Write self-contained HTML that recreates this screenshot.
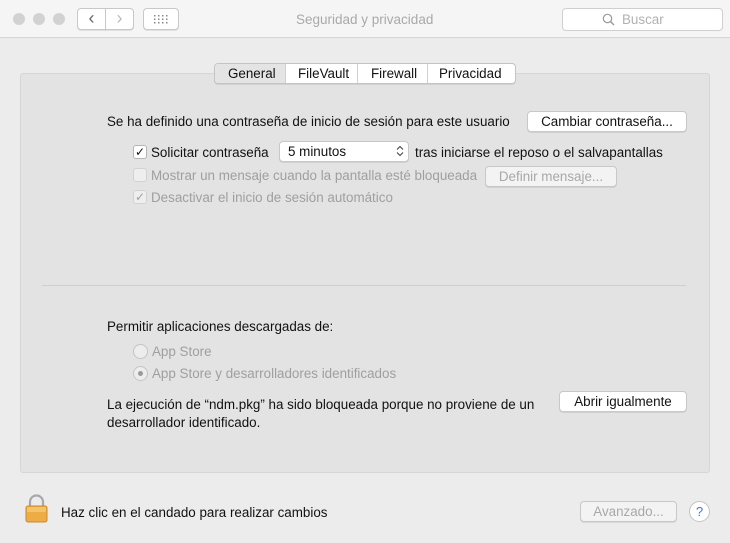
<!DOCTYPE html>
<html><head><meta charset="utf-8"><style>
*{box-sizing:border-box;margin:0;padding:0}
body{width:730px;height:543px;background:#ececec;font-family:"Liberation Sans",sans-serif;font-size:13.4px;color:#111;position:relative;overflow:hidden}
.a{position:absolute;white-space:nowrap}
.tb{left:0;top:0;width:730px;height:38px;background:#f5f5f5;border-bottom:1px solid #d4d4d4}
.dot{width:12px;height:12px;border-radius:50%;background:#d2d2d2;top:13px}
.btn{background:#fff;border:1px solid #c8c8c8;border-radius:4px;box-shadow:0 1px 0 rgba(0,0,0,.08);text-align:center;line-height:19px;height:21px}
.dis{color:#a8a8a8;background:#f3f3f3}
.panel{left:20px;top:73px;width:690px;height:400px;background:#e3e3e3;border:1px solid #d6d6d6;border-radius:3px}
.cb{width:14px;height:14px;border:1px solid #b5b5b5;border-radius:3px;background:#fff;font-size:12px;line-height:12px;text-align:center}
.g{color:#9f9f9f}
.rd{width:15px;height:15px;border-radius:50%;border:1px solid #c4c4c4;background:#ededed}
</style></head><body>
<div class="a tb"></div>
<div class="a dot" style="left:13px"></div>
<div class="a dot" style="left:33px"></div>
<div class="a dot" style="left:53px"></div>
<div class="a btn" style="left:77px;top:8px;width:29px;height:22px;border-radius:4px 0 0 4px;color:#666;font-size:18px;line-height:18px">&#8249;</div>
<div class="a btn" style="left:105px;top:8px;width:29px;height:22px;border-radius:0 4px 4px 0;color:#bbb;font-size:18px;line-height:18px">&#8250;</div>
<div class="a btn" style="left:143px;top:8px;width:36px;height:22px"></div>
<svg class="a" style="left:153px;top:14px" width="16" height="10"><g fill="#888"><rect x="1" y="1" width="1.5" height="1.5"/><rect x="5" y="1" width="1.5" height="1.5"/><rect x="9" y="1" width="1.5" height="1.5"/><rect x="13" y="1" width="1.5" height="1.5"/><rect x="1" y="4.5" width="1.5" height="1.5"/><rect x="5" y="4.5" width="1.5" height="1.5"/><rect x="9" y="4.5" width="1.5" height="1.5"/><rect x="13" y="4.5" width="1.5" height="1.5"/><rect x="1" y="8" width="1.5" height="1.5"/><rect x="5" y="8" width="1.5" height="1.5"/><rect x="9" y="8" width="1.5" height="1.5"/><rect x="13" y="8" width="1.5" height="1.5"/></g></svg>
<div class="a" style="left:296px;top:12px;color:#a9a9a9;font-size:13.5px">Seguridad y privacidad</div>
<div class="a" style="left:562px;top:8px;width:161px;height:23px;background:#fff;border:1px solid #cfcfcf;border-radius:4px"></div>
<svg class="a" style="left:602px;top:13px" width="14" height="14"><circle cx="5.5" cy="5.5" r="4.2" fill="none" stroke="#999" stroke-width="1.2"/><line x1="8.5" y1="8.5" x2="12" y2="12" stroke="#999" stroke-width="1.4"/></svg>
<div class="a" style="left:622px;top:12px;color:#b2b2b2">Buscar</div>

<div class="a panel"></div>
<div class="a" style="left:214px;top:63px;width:302px;height:21px;background:#fff;border:1px solid #c4c4c4;border-radius:4px;box-shadow:0 1px 0 rgba(0,0,0,.08)"></div>
<div class="a" style="left:215px;top:64px;width:71px;height:19px;background:#e4e4e4;border-right:1px solid #d0d0d0;border-radius:3px 0 0 3px"></div>
<div class="a" style="left:357px;top:64px;width:1px;height:19px;background:#d0d0d0"></div>
<div class="a" style="left:427px;top:64px;width:1px;height:19px;background:#d0d0d0"></div>
<div class="a" style="left:228px;top:66px">General</div>
<div class="a" style="left:298px;top:66px">FileVault</div>
<div class="a" style="left:371px;top:66px">Firewall</div>
<div class="a" style="left:439px;top:66px">Privacidad</div>

<div class="a" style="left:107px;top:114px">Se ha definido una contraseña de inicio de sesión para este usuario</div>
<div class="a btn" style="left:527px;top:111px;width:160px">Cambiar contraseña...</div>
<div class="a cb" style="left:133px;top:145px">✓</div>
<div class="a" style="left:151px;top:145px">Solicitar contraseña</div>
<div class="a btn" style="left:279px;top:141px;width:130px;text-align:left;padding-left:8px">5 minutos</div>
<svg class="a" style="left:395px;top:144px" width="10" height="14"><path d="M2 5.5L5 2.5 8 5.5M2 8.5L5 11.5 8 8.5" fill="none" stroke="#444" stroke-width="1.1"/></svg>
<div class="a" style="left:415px;top:145px">tras iniciarse el reposo o el salvapantallas</div>
<div class="a cb" style="left:133px;top:168px;border-color:#d2d2d2;background:#eee"></div>
<div class="a g" style="left:151px;top:168px">Mostrar un mensaje cuando la pantalla esté bloqueada</div>
<div class="a btn dis" style="left:485px;top:166px;width:132px">Definir mensaje...</div>
<div class="a cb g" style="left:133px;top:190px;border-color:#d2d2d2;background:#eee">✓</div>
<div class="a g" style="left:151px;top:190px">Desactivar el inicio de sesión automático</div>

<div class="a" style="left:42px;top:285px;width:644px;height:1px;background:#cfcfcf"></div>

<div class="a" style="left:107px;top:319px">Permitir aplicaciones descargadas de:</div>
<div class="a rd" style="left:133px;top:344px"></div>
<div class="a g" style="left:152px;top:344px">App Store</div>
<div class="a rd" style="left:133px;top:366px"><div style="position:absolute;left:4px;top:4px;width:5px;height:5px;border-radius:50%;background:#9a9a9a"></div></div>
<div class="a g" style="left:152px;top:366px">App Store y desarrolladores identificados</div>
<div class="a" style="left:107px;top:396px;line-height:18px">La ejecución de “ndm.pkg” ha sido bloqueada porque no proviene de un<br>desarrollador identificado.</div>
<div class="a btn" style="left:559px;top:391px;width:128px">Abrir igualmente</div>

<svg class="a" style="left:24px;top:494px" width="25" height="30"><path d="M6 13V8a6.5 6.5 0 0 1 13 0v5" fill="none" stroke="#a8a8a8" stroke-width="2.2"/><rect x="2" y="12" width="21" height="16" rx="2" fill="#eeac46" stroke="#c98a2a"/><rect x="3" y="13" width="19" height="5" fill="#f4c36a"/></svg>
<div class="a" style="left:61px;top:505px">Haz clic en el candado para realizar cambios</div>
<div class="a btn dis" style="left:580px;top:501px;width:97px">Avanzado...</div>
<div class="a" style="left:689px;top:501px;width:21px;height:21px;border-radius:50%;background:#fff;border:1px solid #c4c4c4;color:#3a7bd5;text-align:center;line-height:19px;font-size:13px">?</div>
</body></html>
